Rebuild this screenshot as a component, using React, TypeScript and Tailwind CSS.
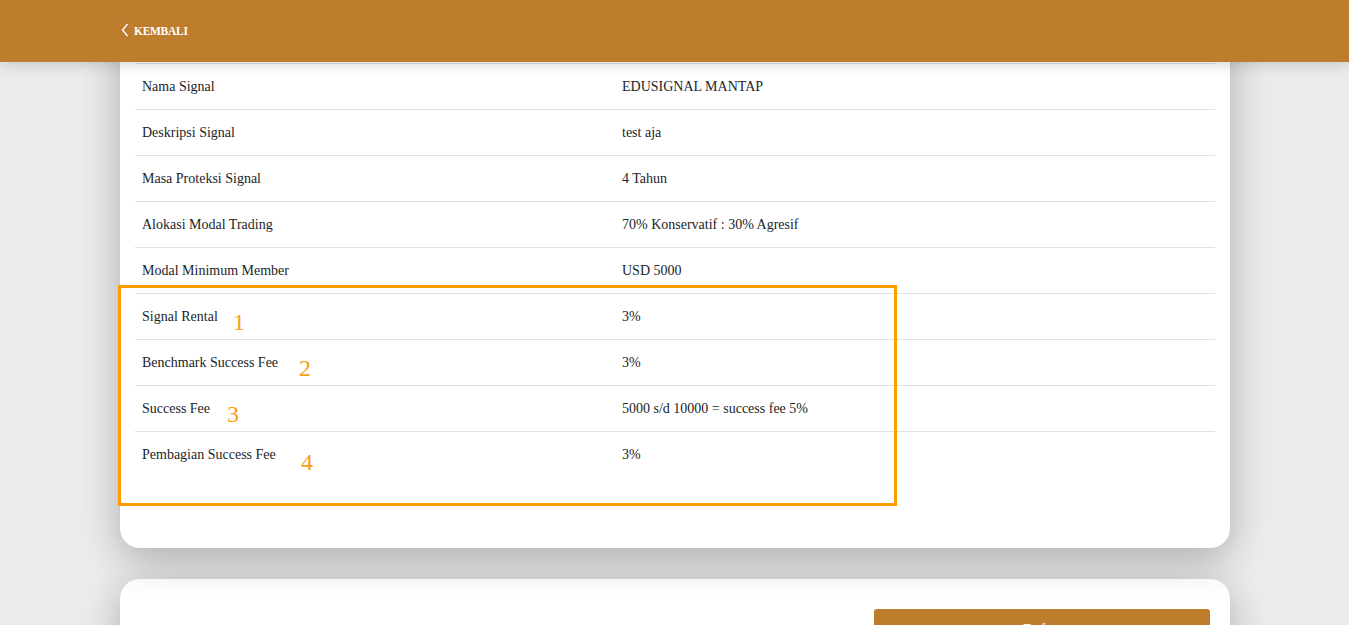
import React from "react";

const rows = [
  { label: "Nama Signal", value: "EDUSIGNAL MANTAP" },
  { label: "Deskripsi Signal", value: "test aja" },
  { label: "Masa Proteksi Signal", value: "4 Tahun" },
  { label: "Alokasi Modal Trading", value: "70% Konservatif : 30% Agresif" },
  { label: "Modal Minimum Member", value: "USD 5000" },
  { label: "Signal Rental", value: "3%" },
  { label: "Benchmark Success Fee", value: "3%" },
  { label: "Success Fee", value: "5000 s/d 10000 = success fee 5%" },
  { label: "Pembagian Success Fee", value: "3%" },
];

// hand-drawn annotation marks over the table
const marks = [
  { n: "1", cls: "left-[112px] top-[22px]" },
  { n: "2", cls: "left-[178px] top-[68px]" },
  { n: "3", cls: "left-[106px] top-[114px]" },
  { n: "4", cls: "left-[180px] top-[162px]" },
];

export default function App() {
  return (
    <div className="min-h-screen bg-[#ececec] font-['Liberation_Serif',serif] text-[#212529] overflow-hidden">
      <header className="relative z-10 h-[62px] bg-[#be7d2c] shadow-[0_2px_14px_rgba(0,0,0,0.18)]">
        <div className="flex items-center h-full pl-[121px] pt-[1px] text-white">
          <svg width="8" height="14" viewBox="0 0 8 14" fill="none" className="mb-[3px]">
            <polyline points="6.5,1 1.5,7 6.5,13" stroke="currentColor" strokeWidth="1.4" />
          </svg>
          <span className="ml-[5px] text-[11.5px] font-bold tracking-tight">KEMBALI</span>
        </div>
      </header>

      <main className="w-[1110px] ml-[120px] -mt-[40px]">
        <div className="relative bg-white rounded-b-[20px] px-[15px] pt-[41px] pb-[71px] shadow-[0_10px_40px_rgba(0,0,0,0.28)]">
          <table className="w-full border-collapse text-[14px] leading-[21px]">
            <tbody>
              {rows.map((r, i) => (
                <tr key={r.label} className={i < rows.length - 1 ? "border-t border-b border-[#dee2e6]" : "border-t border-[#dee2e6]"}>
                  <td className="w-[480px] px-[7px] py-[12px]">{r.label}</td>
                  <td className="px-[7px] py-[12px]">{r.value}</td>
                </tr>
              ))}
            </tbody>
          </table>

          <div className="absolute left-[-2px] top-[263px] w-[779px] h-[221px] border-[3px] border-[#ff9c00] pointer-events-none">
            {marks.map((m) => (
              <span key={m.n} className={`absolute ${m.cls} text-[24px] leading-none text-[#fb9d14]`}>
                {m.n}
              </span>
            ))}
          </div>
        </div>

        <div className="mt-[31px] bg-white rounded-[20px] pt-[30px] pb-[30px] pr-[20px] flex justify-end shadow-[0_10px_40px_rgba(0,0,0,0.28)]">
          <button className="w-[336px] h-[40px] rounded-[3px] bg-[#be7d2c] text-white text-[15px]">
            Daftar
          </button>
        </div>
      </main>
    </div>
  );
}
